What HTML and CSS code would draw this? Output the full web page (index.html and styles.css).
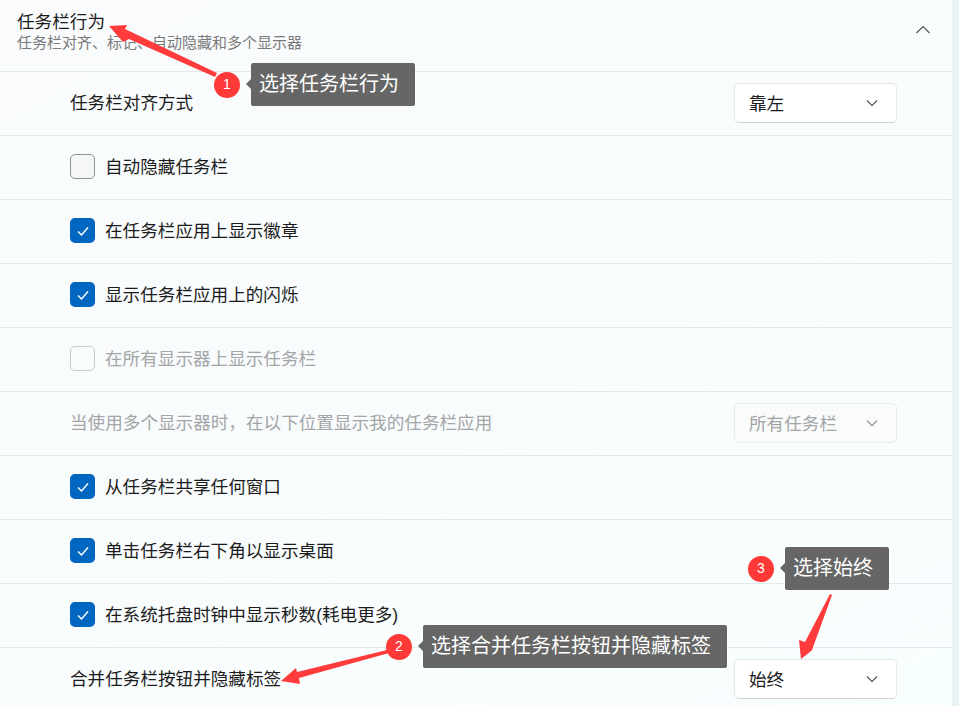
FILE: index.html
```html
<!DOCTYPE html>
<html lang="zh-CN">
<head>
    <meta charset="UTF-8">
    <title>任务栏行为</title>
    <link rel="stylesheet" href="styles.css">
</head>
<body>
    <div class="panel">
        <!-- Header -->
        <div class="panel-head">
            <div class="head-text">
                <div class="panel-title">任务栏行为</div>
                <div class="panel-sub">任务栏对齐、标记、自动隐藏和多个显示器</div>
            </div>
            <svg class="head-chevron" width="16" height="10" viewBox="0 0 16 10"><path d="M1.5 8 L8 1.5 L14.5 8" fill="none" stroke="#555" stroke-width="1.2"/></svg>
        </div>

        <!-- Settings rows -->
        <div class="row">
            <span class="row-text">任务栏对齐方式</span>
            <div class="select"><span>靠左</span><svg width="12" height="8" viewBox="0 0 12 8"><path d="M1 1.5 L6 6.5 L11 1.5" fill="none" stroke="#666" stroke-width="1.3"/></svg></div>
        </div>
        <div class="row">
            <label class="check-item"><span class="box"></span><span class="row-text">自动隐藏任务栏</span></label>
        </div>
        <div class="row">
            <label class="check-item"><span class="box checked"><svg width="14" height="12" viewBox="0 0 14 12"><path d="M2 6.5 L5.5 10 L12 2.5" fill="none" stroke="#fff" stroke-width="1.5"/></svg></span><span class="row-text">在任务栏应用上显示徽章</span></label>
        </div>
        <div class="row">
            <label class="check-item"><span class="box checked"><svg width="14" height="12" viewBox="0 0 14 12"><path d="M2 6.5 L5.5 10 L12 2.5" fill="none" stroke="#fff" stroke-width="1.5"/></svg></span><span class="row-text">显示任务栏应用上的闪烁</span></label>
        </div>
        <div class="row">
            <label class="check-item"><span class="box off"></span><span class="row-text muted">在所有显示器上显示任务栏</span></label>
        </div>
        <div class="row">
            <span class="row-text muted">当使用多个显示器时，在以下位置显示我的任务栏应用</span>
            <div class="select select-off"><span>所有任务栏</span><svg width="12" height="8" viewBox="0 0 12 8"><path d="M1 1.5 L6 6.5 L11 1.5" fill="none" stroke="#999" stroke-width="1.3"/></svg></div>
        </div>
        <div class="row">
            <label class="check-item"><span class="box checked"><svg width="14" height="12" viewBox="0 0 14 12"><path d="M2 6.5 L5.5 10 L12 2.5" fill="none" stroke="#fff" stroke-width="1.5"/></svg></span><span class="row-text">从任务栏共享任何窗口</span></label>
        </div>
        <div class="row">
            <label class="check-item"><span class="box checked"><svg width="14" height="12" viewBox="0 0 14 12"><path d="M2 6.5 L5.5 10 L12 2.5" fill="none" stroke="#fff" stroke-width="1.5"/></svg></span><span class="row-text">单击任务栏右下角以显示桌面</span></label>
        </div>
        <div class="row">
            <label class="check-item"><span class="box checked"><svg width="14" height="12" viewBox="0 0 14 12"><path d="M2 6.5 L5.5 10 L12 2.5" fill="none" stroke="#fff" stroke-width="1.5"/></svg></span><span class="row-text">在系统托盘时钟中显示秒数(耗电更多)</span></label>
        </div>
        <div class="row">
            <span class="row-text">合并任务栏按钮并隐藏标签</span>
            <div class="select"><span>始终</span><svg width="12" height="8" viewBox="0 0 12 8"><path d="M1 1.5 L6 6.5 L11 1.5" fill="none" stroke="#666" stroke-width="1.3"/></svg></div>
        </div>
    </div>

    <!-- Tutorial annotations drawn over the screenshot -->
    <svg class="arrows" width="959" height="706" viewBox="0 0 959 706">
        <path d="M109 26 L127 25 L125 29 L217 73 L215 77 L129 39 L123 42 Z" fill="#ff3b3b"/>
        <path d="M281 681 L296 668 L297 672 L387 650 L389 653 L299 678 L300 684 Z" fill="#ff3b3b"/>
        <path d="M801 659 L799 640 L805 642 L830 594 L832 595 L812 650 L816 647 Z" fill="#ff3b3b"/>
    </svg>

    <div class="note note-one"><span class="dot">1</span><span class="tip">选择任务栏行为</span></div>
    <div class="note note-two"><span class="dot">2</span><span class="tip">选择合并任务栏按钮并隐藏标签</span></div>
    <div class="note note-three"><span class="dot">3</span><span class="tip">选择始终</span></div>
</body>
</html>
```

FILE: styles.css
```css
/* General Styles */
body {
    margin: 0;
    height: 706px;
    overflow: hidden;
    position: relative;
    font-family: "Liberation Sans", "Noto Sans CJK SC", sans-serif;
    background: #e9f3f6;
    color: #1b1b1b;
}
.panel {
    width: 952px;
    height: 706px;
    background: linear-gradient(150deg, #f9fbfd 0%, #f9fcfd 55%, #f8ffff 100%);
}
.panel-head {
    height: 71px;
    box-sizing: border-box;
    padding: 0 21px 0 17px;
    display: flex;
    justify-content: space-between;
    align-items: center;
}
.head-text {
    margin-bottom: 10px;
}
.panel-title {
    font-size: 17.6px;
    line-height: 24px;
}
.panel-sub {
    font-size: 15px;
    line-height: 18px;
    color: #7a7a7a;
}
.head-chevron {
    margin-top: -12px;
}

/* Rows */
.row {
    height: 64px;
    box-sizing: border-box;
    border-top: 1px solid #e3e8ea;
    padding: 0 55px 2px 70px;
    display: flex;
    justify-content: space-between;
    align-items: center;
}
.row-text {
    font-size: 17.6px;
    line-height: 24px;
}
.muted {
    color: #a3a5a6;
}
.check-item {
    display: flex;
    align-items: center;
    gap: 10px;
}
.box {
    width: 25px;
    height: 25px;
    box-sizing: border-box;
    border: 1px solid #8f9395;
    border-radius: 5px;
    background: #f4f6f7;
    display: flex;
    align-items: center;
    justify-content: center;
}
.box.checked {
    border: none;
    background: #0067c0;
}
.box.off {
    border-color: #c9cccd;
    background: transparent;
}
.select {
    width: 163px;
    height: 40px;
    box-sizing: border-box;
    padding: 0 18px 0 14px;
    background: #fff;
    border: 1px solid #e6e8e9;
    border-bottom-color: #cfd1d2;
    border-radius: 5px;
    display: flex;
    justify-content: space-between;
    align-items: center;
    font-size: 17.6px;
}
.select-off {
    background: #fafbfb;
    border-color: #e9ebec;
    color: #a3a5a6;
}

/* Annotations */
.arrows {
    position: absolute;
    top: 0;
    left: 0;
}
.note {
    position: absolute;
    display: flex;
    align-items: center;
    gap: 11px;
}
.note-one {
    left: 214px;
    top: 63px;
}
.note-two {
    left: 386px;
    top: 625px;
}
.note-three {
    left: 748px;
    top: 547px;
}
.dot {
    width: 26px;
    height: 26px;
    border-radius: 50%;
    background: #ff3838;
    color: #fff;
    font-size: 14px;
    line-height: 24px;
    text-align: center;
}
.tip {
    position: relative;
    height: 43px;
    padding: 0 16px 0 8px;
    background: #656665;
    border-radius: 2px;
    color: #fff;
    font-size: 20px;
    line-height: 43px;
}
.tip::before {
    content: "";
    position: absolute;
    left: -5px;
    top: 16px;
    width: 0;
    height: 0;
    border-top: 5px solid transparent;
    border-bottom: 5px solid transparent;
    border-right: 5px solid #656665;
}
```
